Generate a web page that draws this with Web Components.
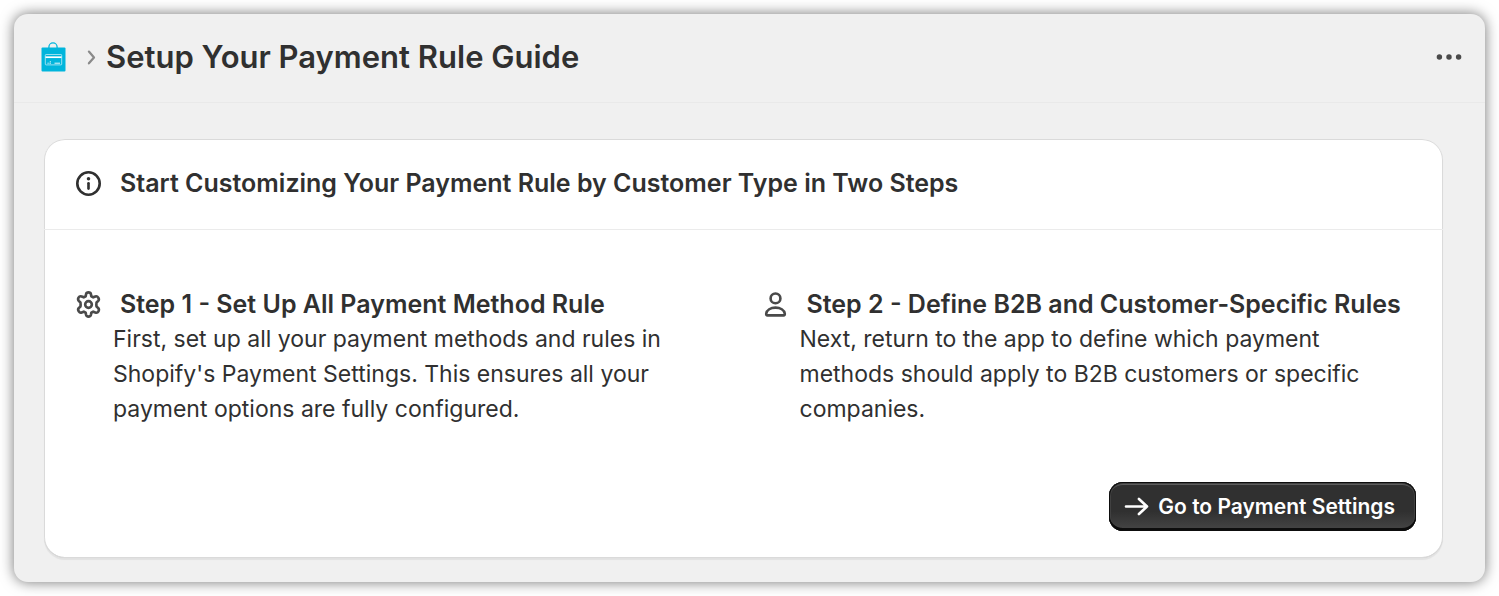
<!DOCTYPE html>
<html lang="en">
<head>
<meta charset="utf-8">
<title>Setup Your Payment Rule Guide</title>
<style>
    body {
        box-sizing: border-box;
        min-height: 100vh;
        margin: 0;
        padding: 14px;
        background: #fff;
        color: #303030;
        font: 23px/35px Inter, sans-serif;
    }
</style>
</head>
<body>

<app-frame>
    <page-header slot="header">Setup Your Payment Rule Guide</page-header>
    <guide-card>
        <ui-icon slot="icon" name="info"></ui-icon>
        <span slot="title">Start Customizing Your Payment Rule by Customer Type in Two Steps</span>
        <guide-step icon="settings">
            <span slot="title">Step 1 - Set Up All Payment Method Rule</span>
            First, set up all your payment methods and rules in Shopify's Payment Settings. This ensures all your payment options are fully configured.
        </guide-step>
        <guide-step icon="person">
            <span slot="title">Step 2 - Define B2B and Customer-Specific Rules</span>
            Next, return to the app to define which payment methods should apply to B2B customers or specific companies.
        </guide-step>
        <primary-button slot="action" icon="arrow">Go to Payment Settings</primary-button>
    </guide-card>
</app-frame>

<script>
class BaseElement extends HTMLElement {
    constructor()
    {
        super();

        const template = document.createElement("template");
        template.innerHTML = this.constructor.markup;
        this.attachShadow({mode: "open"});
        this.shadowRoot.append(template.content.cloneNode(true));
    }
}

class UiIcon extends BaseElement {
    static observedAttributes = ["name"];

    static markup = `
        <style>
            :host { display: block; flex: none; width: 35px; height: 35px; color: #4a4a4a; }
            :host([name="info"]) { color: #303030; }
            :host([name="arrow"]) { color: inherit; }
            svg { display: block; width: 100%; height: 100%; }
        </style>
        <svg viewBox="0 0 20 20" fill="none" stroke="currentColor" stroke-width="1.5" stroke-linecap="round" stroke-linejoin="round" aria-hidden="true"></svg>
    `;

    static shapes = {
        info: `
            <circle cx="10" cy="10" r="6.4"/>
            <path d="M10 9.9v3"/>
            <circle cx="10" cy="7.3" r="1" fill="currentColor" stroke="none"/>`,
        settings: `
            <circle cx="10" cy="10" r="1.9"/>
            <path d="M8.6 4.1Q8.8 3.1 10 3.1T11.4 4.1L11.6 5.3 12.7 5.9 13.9 5.4Q14.9 5 15.6 6.1T15.5 8L14.6 8.8Q14.4 10 14.6 11.2L15.5 12Q16.3 12.8 15.7 13.9T13.9 14.6L12.7 14.1 11.6 14.7 11.4 15.9Q11.2 16.9 10 16.9T8.6 15.9L8.4 14.7 7.3 14.1 6.1 14.6Q5.1 15 4.4 13.9T4.5 12L5.4 11.2Q5.6 10 5.4 8.8L4.5 8Q3.7 7.2 4.3 6.1T6.1 5.4L7.3 5.9 8.4 5.3Z"/>`,
        person: `
            <circle cx="10" cy="6.5" r="2.8"/>
            <path d="M4.7 15.2C5 13.2 7.2 11.8 10 11.8S15 13.2 15.3 15.2Q15.4 16.2 14.6 16.2H5.4Q4.6 16.2 4.7 15.2Z"/>`,
        arrow: `<path d="M4 10H16M11.4 5.7 16 10 11.4 14.3"/>`,
        chevron: `<path d="M8.6 6.4 12 10.3 8.6 14.2"/>`,
        more: `
            <g fill="currentColor" stroke="none">
                <circle cx="4" cy="10" r="1.7"/>
                <circle cx="10" cy="10" r="1.7"/>
                <circle cx="16" cy="10" r="1.7"/>
            </g>`,
    };

    attributeChangedCallback(name, oldValue, newValue)
    {
        this.shadowRoot.querySelector("svg").innerHTML = UiIcon.shapes[newValue] || "";
    }
}

class AppFrame extends BaseElement {
    static markup = `
        <style>
            :host {
                display: block;
                border-radius: 14px;
                background: #f0f0f0;
                box-shadow: 0 0 14px rgba(0, 0, 0, 0.55);
            }
            main { padding: 36px 42px 24px 30px; }
        </style>
        <slot name="header"></slot>
        <main><slot></slot></main>
    `;
}

class PageHeader extends BaseElement {
    static markup = `
        <style>
            :host {
                display: flex;
                align-items: center;
                padding: 21px 20px 23px 26px;
                border-bottom: 1px solid #e9e9e9;
            }
            a { display: block; }
            .logo { display: block; width: 26px; height: 30px; }
            .chevron { width: 30px; height: 30px; margin-left: 10px; color: #8a8a8a; }
            h1 { flex: 1; margin: 0; font-size: 31px; line-height: 44px; font-weight: 600; }
            button {
                padding: 0;
                border: 0;
                background: none;
                color: #4a4a4a;
            }
            .more { width: 32px; height: 32px; }
        </style>
        <a href="#" aria-label="App home">
            <svg class="logo" viewBox="0 0 26 30" fill="none" aria-hidden="true">
                <path d="M8.9 6V5a4.1 4.1 0 0 1 8.2 0V6" stroke="#00b5dc" stroke-width="1.3"/>
                <rect x="1.5" y="5.5" width="24" height="24" rx="1" fill="#00b5dc"/>
                <rect x="5.3" y="12.5" width="16.4" height="10.4" rx=".8" stroke="#bdebf6" stroke-width=".8"/>
                <path d="M5.5 15.2h16" stroke="#fff" stroke-width="1.7"/>
                <path d="M14.5 21.2h5.5M7.5 21.2h1.2M9.5 21.2h1.4M9.8 19.7h1" stroke="#e5f8fc" stroke-width="1"/>
            </svg>
        </a>
        <ui-icon class="chevron" name="chevron"></ui-icon>
        <h1><slot></slot></h1>
        <button type="button" aria-label="More actions"><ui-icon class="more" name="more"></ui-icon></button>
    `;
}

class GuideCard extends BaseElement {
    static markup = `
        <style>
            :host {
                display: block;
                border-radius: 21px;
                background: #fff;
                box-shadow: inset 0 0 0 1px #dadada, inset 0 -1px 0 #c6c6c6, 0 2px 1px rgba(0, 0, 0, 0.06);
            }
            header {
                display: flex;
                align-items: center;
                gap: 14px;
                padding: 26px 27px 28px;
                border-bottom: 1px solid #ebebeb;
            }
            h2 { margin: 0; font-size: 25px; line-height: 36px; font-weight: 600; }
            .steps {
                display: grid;
                grid-template-columns: 1fr 1fr;
                gap: 28px;
                padding: 56px 27px 55px;
            }
            footer { display: flex; justify-content: flex-end; padding: 0 27px 27px; }
        </style>
        <header>
            <slot name="icon"></slot>
            <h2><slot name="title"></slot></h2>
        </header>
        <div class="steps"><slot></slot></div>
        <footer><slot name="action"></slot></footer>
    `;
}

class GuideStep extends BaseElement {
    static markup = `
        <style>
            :host { display: block; }
            .heading { display: flex; align-items: center; gap: 14px; }
            h3 { margin: 0; font-size: 25px; line-height: 36px; font-weight: 600; }
            p { margin: 0; padding-left: 42px; }
        </style>
        <div class="heading">
            <ui-icon></ui-icon>
            <h3><slot name="title"></slot></h3>
        </div>
        <p><slot></slot></p>
    `;

    connectedCallback()
    {
        this.shadowRoot.querySelector("ui-icon").setAttribute("name", this.getAttribute("icon"));
    }
}

class PrimaryButton extends BaseElement {
    static markup = `
        <style>
            :host { display: block; }
            button {
                display: flex;
                align-items: center;
                gap: 4px;
                height: 49px;
                padding: 0 21px 0 10px;
                border: 0;
                border-radius: 14px;
                background: linear-gradient(#303030 60%, #464646);
                box-shadow: inset 0 0 0 1px #0d0d0d, inset 0 -3px 0 #0d0d0d, inset 0 0 0 2px #414141, inset 0 3px 0 #5c5c5c;
                color: #fff;
                font: 600 21px/28px Inter, sans-serif;
            }
        </style>
        <button type="button"><ui-icon></ui-icon><slot></slot></button>
    `;

    connectedCallback()
    {
        this.shadowRoot.querySelector("ui-icon").setAttribute("name", this.getAttribute("icon"));
    }
}

window.customElements.define("ui-icon", UiIcon);
window.customElements.define("app-frame", AppFrame);
window.customElements.define("page-header", PageHeader);
window.customElements.define("guide-card", GuideCard);
window.customElements.define("guide-step", GuideStep);
window.customElements.define("primary-button", PrimaryButton);
</script>
</body>
</html>
